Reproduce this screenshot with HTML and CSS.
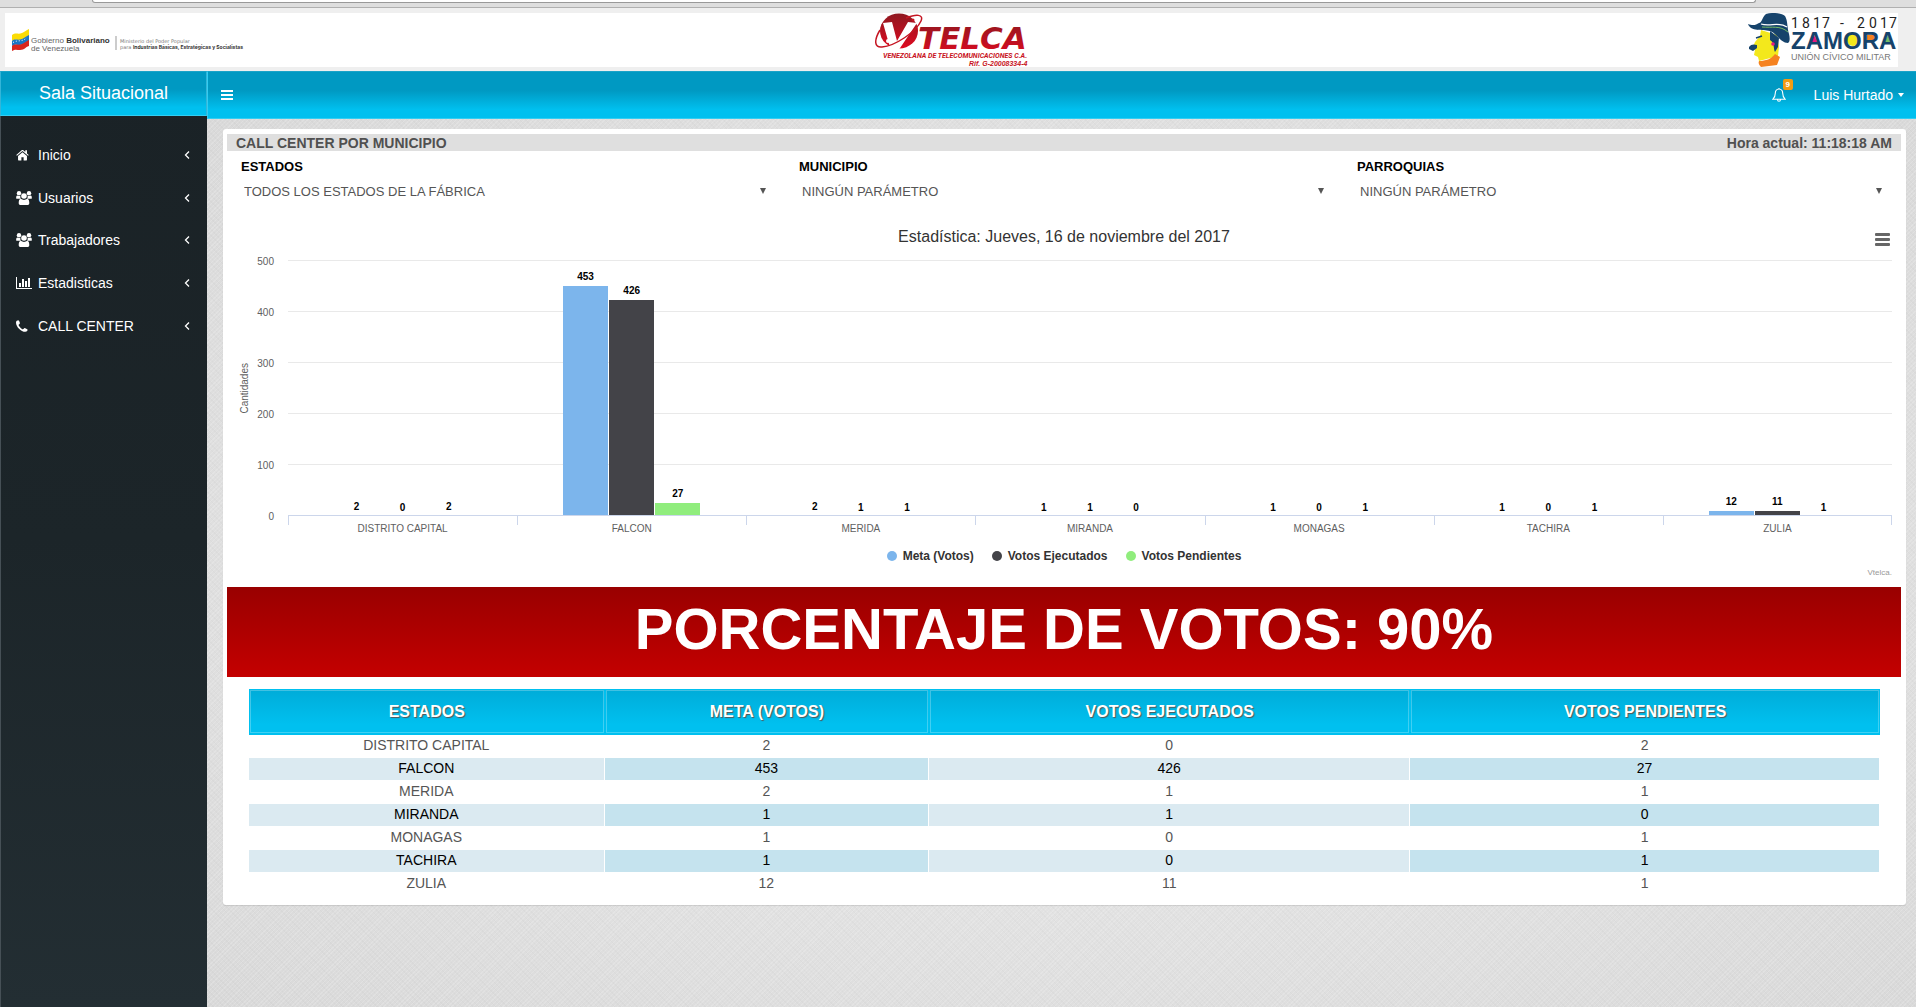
FILE: index.html
```html
<!DOCTYPE html>
<html lang="es">
<head>
<meta charset="utf-8">
<title>Sala Situacional</title>
<link rel="stylesheet" href="styles.css">
</head>
<body>
<svg class="sprite" aria-hidden="true">
  <symbol id="i-home" viewBox="0 0 14 12"><path d="M7 3 2.200 7v4.200c0 .4.3.6.6.6h3V8.400h2.400v3.400h3c.4 0 .6-.3.600-.6V7z"/><path d="M13.700 5.900 11.800 4.300V.8H10v2L7.900 1C7.400.6 6.600.6 6.100 1L.3 5.900l.7.800L7 1.800l6 4.900z"/></symbol>
  <symbol id="i-users" viewBox="0 0 16 14"><circle cx="3" cy="2.200" r="2.200"/><circle cx="13" cy="2.200" r="2.200"/><path d="M.2 7.500C0 5.500.6 4.300 1.800 4.700c1 .5 1.800.4 2.700 0-.5 1.300-.1 2.300.6 3H1.500c-.8 0-1.300-.1-1.300-.2zM15.800 7.500c.2-2-.4-3.200-1.600-2.800-1 .5-1.800.4-2.700 0 .5 1.300.1 2.300-.6 3h3.600c.8 0 1.300-.1 1.300-.2z"/><circle cx="8" cy="5" r="2.800"/><path d="M4.800 7.800c1.900 1.500 4.500 1.500 6.400 0 1.500.2 2.100 2 2.100 4.200 0 1.400-.8 2-2 2H4.700c-1.200 0-2-.6-2-2 0-2.200.6-4 2.100-4.200z"/></symbol>
  <symbol id="i-chart" viewBox="0 0 16 12"><path d="M0 0h1v11h15v1H0zM3 6h2v4H3zM6 2h2v8H6zM9 4h2v6H9zM12 1h2v9h-2z"/></symbol>
  <symbol id="i-phone" viewBox="0 0 12 12"><path d="M0 2.400C0 1 1.300.2 2.400.2c.5 0 1.600 2.600 1.500 3 0 .6-1.300 1.200-1.300 1.700 0 .8 3.100 4.300 4.300 4.300.6 0 1.100-1.300 1.700-1.300.5 0 3 1.300 3 1.900 0 1-1 2-2.300 2C5 11.800 0 6.800 0 2.400z"/></symbol>
  <symbol id="i-left" viewBox="0 0 6 10"><path d="M5 1.500 1.500 5 5 8.500" fill="none" stroke="currentColor" stroke-width="1.300"/></symbol>
  <symbol id="i-bars" viewBox="0 0 12 10"><path d="M0 0h12v2H0zM0 4h12v2H0zM0 8h12v2H0z"/></symbol>
  <symbol id="i-bell" viewBox="0 0 14 14"><path d="M7 1c-2.600 0-3.700 2-3.700 4.300 0 3.300-.9 4.500-2.500 6h12.400c-1.600-1.500-2.500-2.700-2.500-6C10.700 3 9.600 1 7 1zM5.500 11.500c0 1 .7 1.800 1.500 1.800s1.500-.8 1.500-1.800M7 0v1" fill="none" stroke="currentColor" stroke-width="1.100"/></symbol>
</svg>

<div class="browser-edge"><div class="url-edge"></div></div>

<header class="brand-strip">
  <div class="brands">
    <svg class="gov" width="270" height="54" viewBox="0 0 270 54" role="img" aria-label="Gobierno Bolivariano de Venezuela">
      <path d="M7 22c4-3 6 0 10-2 3-1 4-3 7-4v7c-4 1-5 4-9 4-3 0-5-1-8 1z" fill="#fbdc05"/>
      <path d="M7 28c3-3 6 0 10-2 3-1 4-3 7-4v6c-4 1-5 4-9 4-3 0-5-1-8 1z" fill="#1b76c4"/>
      <path d="M7 33c3-3 6 0 10-2 3-1 4-3 7-4v6c-4 1-4 4-9 4-3 0-5-1-8 1z" fill="#da251c"/>
      <path d="M8 29.500c5-3 9 0 14-5" fill="none" stroke="#fff" stroke-dasharray="1 2"/>
      <g class="gov-name"><text x="26" y="30">Gobierno <tspan class="b">Bolivariano</tspan></text><text x="26" y="38">de Venezuela</text></g>
      <path d="M111 23v14" stroke="#999"/>
      <g class="gov-min"><text x="115" y="30">Ministerio del Poder Popular</text><text x="115" y="36">para <tspan class="b">Industrias Básicas, Estratégicas y Socialistas</tspan></text></g>
    </svg>
    <svg class="vtelca" width="156" height="54" viewBox="0 0 156 54" role="img" aria-label="Vtelca">
      <defs><linearGradient id="red" x1="0" y1="0" x2="0" y2="1"><stop offset="0" stop-color="#8e1820"/><stop offset="1" stop-color="#df0a20"/></linearGradient></defs>
      <ellipse cx="24" cy="18" rx="19" ry="17.500" fill="url(#red)"/>
      <path d="M8 10l9-1 5 19L33 9l9 1-19 28h-7z" fill="#fff"/>
      <path d="M5 17C-1 27-1 35 7 34 20 33 41 19 46 8 49 1 41 1 31 5" fill="none" stroke="#c51623" stroke-width="1.500"/>
      <circle cx="13" cy="28" r="2" fill="#fff"/><circle cx="38" cy="7" r="1.500" fill="#c51623"/>
      <text class="v-main" x="43" y="36" fill="url(#red)">TELCA</text>
      <text class="v-sub" x="8" y="45">VENEZOLANA DE TELECOMUNICACIONES C.A.</text>
      <text class="v-rif" x="94" y="53">Rif. G-20008334-4</text>
    </svg>
    <svg class="zamora" width="150" height="54" viewBox="0 0 150 54" role="img" aria-label="Zamora">
      <path d="M13 17l16 5 2 12-1 9-19 5-1-4-4-2 1-5-2-3 2-5 5-6z" fill="#f3e81c"/>
      <path d="M11 48c7 0 12-2 16-7l5 3-3 8-16 2c-2-2-3-4-2-6z" fill="#f58220"/>
      <path d="M0 11c5 2 8 1 11-1 3 0 3-6 7-9 7-2 15-1 19 2 3 5 2 12 4 18 1 4 1 8-1 9-8 0-10-9-18-12C14 16 3 19 0 11z" fill="#16436b"/>
      <path d="M22 18l9 7-1 9-3 5c-2-4 0-9-5-12zM1 34c2-3 5-3 8-2v3l-4 3-4-2z" fill="#16436b"/>
      <path d="M13 11c10 3 17-3 26 3" fill="none" stroke="#fff" stroke-width="1.200"/>
      <path d="M14 14c10 1 18-2 26 5" fill="none" stroke="#74bd67"/>
      <path d="M8 25l6-2" stroke="#16436b" stroke-width="1.500"/>
      <circle cx="25" cy="31" r="1.800" fill="#e81780"/>
      <text class="z-year" y="15" x="43 54 65 74 92 109 121 132 141">1817-2017</text>
      <path d="M62 30l4-8 4 8z" fill="#e81780"/><circle cx="105" cy="27" r="6" fill="#f3e81c"/>
      <path d="M119 22h7v6h-7z" fill="#f58220"/><path d="M136 30l4-8 4 8z" fill="#74bd67"/>
      <text class="z-main" x="43" y="36">ZAMORA</text>
      <text class="z-sub" x="43" y="47">UNIÓN CÍVICO MILITAR</text>
    </svg>
  </div>
</header>

<div class="app">
  <aside class="sidebar">
    <a class="logo" href="#">Sala Situacional</a>
    <nav class="menu">
      <a href="#"><svg class="ico" width="13" height="12"><use href="#i-home"/></svg><span>Inicio</span><svg class="chev" width="6" height="10"><use href="#i-left"/></svg></a>
      <a href="#"><svg class="ico" width="16" height="14"><use href="#i-users"/></svg><span>Usuarios</span><svg class="chev" width="6" height="10"><use href="#i-left"/></svg></a>
      <a href="#"><svg class="ico" width="16" height="14"><use href="#i-users"/></svg><span>Trabajadores</span><svg class="chev" width="6" height="10"><use href="#i-left"/></svg></a>
      <a href="#"><svg class="ico" width="16" height="12"><use href="#i-chart"/></svg><span>Estadisticas</span><svg class="chev" width="6" height="10"><use href="#i-left"/></svg></a>
      <a href="#"><svg class="ico" width="12" height="12"><use href="#i-phone"/></svg><span>CALL CENTER</span><svg class="chev" width="6" height="10"><use href="#i-left"/></svg></a>
    </nav>
  </aside>

  <div class="main">
    <div class="navbar">
      <button class="toggle" type="button" aria-label="Menú"><svg width="12" height="10"><use href="#i-bars"/></svg></button>
      <button class="bell" type="button" aria-label="Notificaciones"><svg width="14" height="14"><use href="#i-bell"/></svg><span class="badge">9</span></button>
      <button class="user" type="button">Luis Hurtado <span class="caret"></span></button>
    </div>

    <main class="content">
      <section class="card">
        <div class="card-title"><span>CALL CENTER POR MUNICIPIO</span><span>Hora actual: 11:18:18 AM</span></div>
        <form class="filters">
          <div class="filter"><label for="est">ESTADOS</label><select id="est"><option>TODOS LOS ESTADOS DE LA FÁBRICA</option></select></div>
          <div class="filter"><label for="mun">MUNICIPIO</label><select id="mun"><option>NINGÚN PARÁMETRO</option></select></div>
          <div class="filter"><label for="par">PARROQUIAS</label><select id="par"><option>NINGÚN PARÁMETRO</option></select></div>
        </form>

        <div class="chart">
          <div class="chart-title">Estadística: Jueves, 16 de noviembre del 2017
            <button class="chart-menu" type="button" aria-label="Opciones del gráfico"><i></i><i></i><i></i></button>
          </div>
          <div class="chart-body">
            <div class="axis-name"><span>Cantidades</span></div>
            <div class="y-axis"><span>500</span><span>400</span><span>300</span><span>200</span><span>100</span><span>0</span></div>
            <div class="plot">
              <div class="group"><div class="col"><b>2</b><i class="meta" style="height:0.4%"></i></div><div class="col"><b>0</b><i class="done" style="height:0%"></i></div><div class="col"><b>2</b><i class="left" style="height:0.4%"></i></div></div>
              <div class="group"><div class="col"><b>453</b><i class="meta" style="height:90.6%"></i></div><div class="col"><b>426</b><i class="done" style="height:85.2%"></i></div><div class="col"><b>27</b><i class="left" style="height:5.4%"></i></div></div>
              <div class="group"><div class="col"><b>2</b><i class="meta" style="height:0.4%"></i></div><div class="col"><b>1</b><i class="done" style="height:0.2%"></i></div><div class="col"><b>1</b><i class="left" style="height:0.2%"></i></div></div>
              <div class="group"><div class="col"><b>1</b><i class="meta" style="height:0.2%"></i></div><div class="col"><b>1</b><i class="done" style="height:0.2%"></i></div><div class="col"><b>0</b><i class="left" style="height:0%"></i></div></div>
              <div class="group"><div class="col"><b>1</b><i class="meta" style="height:0.2%"></i></div><div class="col"><b>0</b><i class="done" style="height:0%"></i></div><div class="col"><b>1</b><i class="left" style="height:0.2%"></i></div></div>
              <div class="group"><div class="col"><b>1</b><i class="meta" style="height:0.2%"></i></div><div class="col"><b>0</b><i class="done" style="height:0%"></i></div><div class="col"><b>1</b><i class="left" style="height:0.2%"></i></div></div>
              <div class="group"><div class="col"><b>12</b><i class="meta" style="height:2.4%"></i></div><div class="col"><b>11</b><i class="done" style="height:2.2%"></i></div><div class="col"><b>1</b><i class="left" style="height:0.2%"></i></div></div>
            </div>
            <div class="x-axis"><span>DISTRITO CAPITAL</span><span>FALCON</span><span>MERIDA</span><span>MIRANDA</span><span>MONAGAS</span><span>TACHIRA</span><span>ZULIA</span></div>
          </div>
          <div class="legend"><span><i class="meta"></i>Meta (Votos)</span><span><i class="done"></i>Votos Ejecutados</span><span><i class="left"></i>Votos Pendientes</span></div>
          <div class="credit">Vtelca.</div>
        </div>

        <h1 class="banner">PORCENTAJE DE VOTOS: 90%</h1>

        <div class="table-wrap">
          <table>
            <colgroup><col class="c1"><col class="c2"><col class="c3"><col class="c4"></colgroup>
            <thead><tr><th>ESTADOS</th><th>META (VOTOS)</th><th>VOTOS EJECUTADOS</th><th>VOTOS PENDIENTES</th></tr></thead>
            <tbody>
              <tr><td>DISTRITO CAPITAL</td><td>2</td><td>0</td><td>2</td></tr>
              <tr><td>FALCON</td><td>453</td><td>426</td><td>27</td></tr>
              <tr><td>MERIDA</td><td>2</td><td>1</td><td>1</td></tr>
              <tr><td>MIRANDA</td><td>1</td><td>1</td><td>0</td></tr>
              <tr><td>MONAGAS</td><td>1</td><td>0</td><td>1</td></tr>
              <tr><td>TACHIRA</td><td>1</td><td>0</td><td>1</td></tr>
              <tr><td>ZULIA</td><td>12</td><td>11</td><td>1</td></tr>
            </tbody>
          </table>
        </div>
      </section>
    </main>
  </div>
</div>
</body>
</html>
```
FILE: styles.css
```css
* { box-sizing: border-box; }
body {
  margin: 0;
  min-height: 100vh;
  display: flex;
  flex-direction: column;
  font: 14px/20px "Liberation Sans", Arial, sans-serif;
  color: #555;
  background: #efefef;
}
a { color: inherit; text-decoration: none; }
button { font: inherit; color: inherit; background: none; border: 0; padding: 0; cursor: pointer; }
svg { fill: currentColor; }
.sprite { display: none; }

/* Bottom edge of the window frame */
.browser-edge { height: 8px; padding: 0 160px 0 92px; background: #dedede; border-bottom: 1px solid #b0b0b0; }
.url-edge { height: 3px; background: #fff; border: 1px solid #999; border-top: 0; border-radius: 0 0 3px 3px; }

/* Institutional logos */
.brand-strip { padding: 5px 18px 4px 5px; }
.brands { display: grid; grid-template-columns: 1fr auto 1fr; height: 54px; background: #fff; }
.vtelca { margin-left: 3px; }
.zamora { justify-self: end; }
.gov-name { font-size: 8px; fill: #666; }
.gov-min { font: 5px "DejaVu Sans", sans-serif; fill: #777; }
.gov-min .b { font-family: Inter, sans-serif; }
.b { font-weight: bold; fill: #333; }
.v-main { font: italic bold 31px "DejaVu Sans", sans-serif; }
.v-sub { font: italic bold 7px Roboto, sans-serif; fill: #c81222; }
.v-rif { font-size: 7px; font-weight: bold; font-style: italic; fill: #c81222; }
.z-year { font: 14px Roboto, sans-serif; fill: #222; }
.z-main { font-size: 24px; font-weight: bold; fill: #16436b; }
.z-sub { font-size: 9px; fill: #777; }

.app { display: flex; flex: 1; }

/* Sidebar */
.sidebar {
  width: 207px;
  flex: none;
  color: #fff;
  border-left: 1px solid #465056;
  background: linear-gradient(#1a2226 0, #1c2529 50%, #232e33 100%);
}
.logo {
  display: block;
  height: 45px;
  margin-left: -1px;
  border: 1px solid #33b5d8;
  border-top-color: #1aa3c8;
  border-bottom-color: #33cdf2;
  background: linear-gradient(#0099c2 0, #0099c2 40%, #00c0ef 82%) padding-box;
  font-size: 18px;
  line-height: 43px;
  text-align: center;
}
.menu { display: grid; grid-auto-rows: 1fr; height: 213px; margin-top: 18px; }
.menu a { display: grid; grid-template-columns: 22px 1fr auto; align-items: center; padding: 0 17px 0 15px; }

/* Top bar */
.main { flex: 1; min-width: 0; display: flex; flex-direction: column; }
.navbar {
  display: flex;
  align-items: center;
  height: 48px;
  padding: 0 12px 0 13px;
  color: #fff;
  border: 1px solid #33cdf2;
  border-top-color: #1aa3c8;
  border-right: 0;
  background: linear-gradient(#0099c2 0, #0099c2 40%, #00c0ef 82%) padding-box;
}
.toggle { display: flex; margin-right: auto; }
.bell { position: relative; display: flex; margin-right: 28px; }
.badge {
  position: absolute;
  left: 11px;
  top: -9px;
  width: 10px;
  border-radius: 2px;
  background: #f39c12;
  font-size: 8px;
  font-weight: bold;
  line-height: 11px;
  text-align: center;
}
.user { display: flex; align-items: center; gap: 5px; }
.caret { border: 3px solid transparent; border-top: 4px solid #fff; border-bottom: 0; }

/* Page ground: a fine weave that is lighter in the middle */
.content {
  flex: 1;
  padding: 10px 10px 20px 16px;
  background:
    repeating-linear-gradient(45deg, rgba(0,0,0,.02) 0 1px, transparent 1px 4px),
    repeating-linear-gradient(-45deg, rgba(255,255,255,.16) 0 1px, transparent 1px 3px),
    radial-gradient(ellipse at center, #e8e8e8 0, #e3e3e3 50%, #d9d9d9 100%);
}
.card { padding: 5px 5px 9px 4px; border-radius: 3px; background: #fff; box-shadow: 0 1px 1px rgba(0,0,0,.1); }
.card-title {
  display: flex;
  justify-content: space-between;
  height: 17px;
  padding: 0 9px;
  background: #dfdfdf;
  color: #505050;
  font-weight: bold;
  line-height: 18px;
}

.filters { display: grid; grid-template-columns: repeat(3, 1fr); padding-top: 7px; }
.filter { display: grid; padding: 0 14px; }
.filter label { color: #000; font-size: 13px; font-weight: bold; line-height: 18px; }
.filter select {
  appearance: none;
  height: 28px;
  margin-top: 1px;
  padding: 0 20px 0 3px;
  border: 0;
  color: #555;
  font: 13px "Liberation Sans", Arial, sans-serif;
  background: url("data:image/svg+xml,%3Csvg xmlns='http://www.w3.org/2000/svg' width='6' height='6'%3E%3Cpath d='M0 0h6L3 6z' fill='%23555'/%3E%3C/svg%3E") right 5px center no-repeat;
}

/* Chart */
.chart { padding: 22px 9px 8px 9px; }
.chart-title { position: relative; color: #333; font-size: 16px; text-align: center; }
.chart-menu { position: absolute; right: 2px; top: 6px; display: grid; gap: 2px; width: 15px; }
.chart-menu i { height: 3px; border-radius: 1px; background: #666; }
.chart-body { display: grid; grid-template-columns: 17px 35px 1fr; margin-top: 13px; font-size: 10px; color: #606060; }
.axis-name { display: flex; align-items: center; justify-content: center; }
.axis-name span { writing-mode: vertical-rl; transform: rotate(180deg); line-height: 16px; }
.y-axis { display: flex; flex-direction: column; justify-content: space-between; margin: -4px 14px -7px 0; line-height: 12px; text-align: right; }
.plot {
  display: grid;
  grid-template-columns: repeat(7, 1fr);
  height: 256px;
  overflow: hidden;
  border-bottom: 1px solid #ccd6eb;
  background: repeating-linear-gradient(#e9e9e9 0 1px, transparent 1px 51px);
}
.group { display: flex; gap: 1px; padding: 2px 20% 0; }
.col { flex: 1; display: flex; flex-direction: column; justify-content: flex-end; height: 255px; }
.col b { flex: none; margin-bottom: 3px; color: #000; line-height: 12px; text-align: center; }
.col i { flex: none; }
.meta { background: #7cb5ec; }
.done { background: #434348; }
.left { background: #90ed7d; }
.x-axis {
  grid-column: 3;
  display: grid;
  grid-template-columns: repeat(7, 1fr);
  background: linear-gradient(#ccd6eb, #ccd6eb) right top / 1px 9px no-repeat;
}
.x-axis span {
  padding-top: 5px;
  line-height: 16px;
  text-align: center;
  background: linear-gradient(#ccd6eb, #ccd6eb) left top / 1px 9px no-repeat;
}
.legend { display: flex; justify-content: center; gap: 18px; margin-top: 11px; color: #333; font-size: 12px; font-weight: bold; line-height: 16px; }
.legend span { display: flex; align-items: center; gap: 6px; }
.legend i { width: 10px; height: 10px; border-radius: 50%; }
.credit { margin-top: 3px; color: #999; font-size: 8px; line-height: 12px; text-align: right; }

.banner {
  margin: 0;
  height: 90px;
  background: linear-gradient(#990000, #c40000);
  color: #fff;
  font-size: 58px;
  line-height: 84px;
  text-align: center;
}

/* Results table */
.table-wrap { margin: 12px 21px 0 22px; }
table { width: 100%; table-layout: fixed; border-collapse: separate; border-spacing: 0; text-align: center; }
.c1 { width: 21.8%; }
.c2 { width: 19.9%; }
.c3 { width: 29.5%; }
.c4 { width: 28.8%; }
th {
  height: 46px;
  padding: 0;
  color: #fff;
  font-size: 16px;
  text-shadow: 1px 1px 1px #555;
  background: linear-gradient(#00acd9, #00c0ef 80%);
  border: 1px solid #00c0ef;
  border-bottom-width: 2px;
  box-shadow: inset 0 0 0 1px rgba(255,255,255,.25);
}
td {
  height: 23px;
  padding: 0 0 2px;
  border: solid #fff;
  border-width: 0 1px 1px 0;
  font-size: 14px;
  line-height: 20px;
}
tbody tr:nth-child(even) td { background: #dbeaf1; color: #000; }
tbody tr:nth-child(even) td:nth-child(even) { background: #c5e3ee; }
```
